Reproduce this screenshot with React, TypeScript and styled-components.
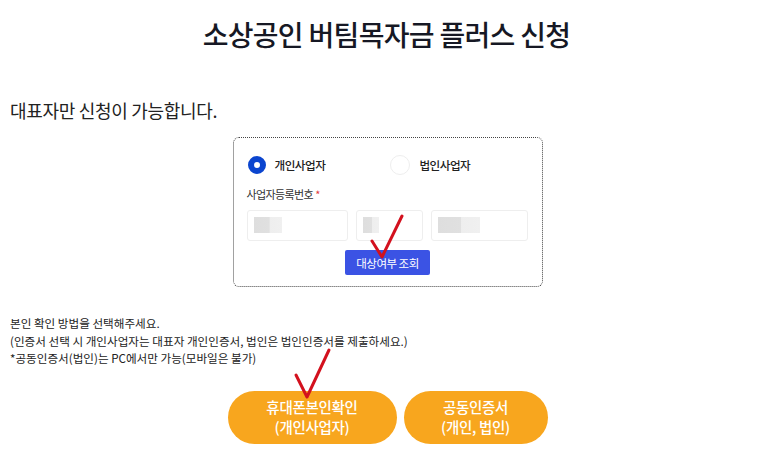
import React from "react";
import styled, { createGlobalStyle } from "styled-components";

const Global = createGlobalStyle`
  html, body { margin: 0; padding: 0; background: #ffffff; }
  body { font-family: "Noto Sans CJK KR", "Noto Sans", sans-serif; color: #222; }
  * { box-sizing: border-box; }
`;

const Page = styled.div`
  position: relative;
  width: 773px;
  height: 463px;
  overflow: hidden;
  background: #fff;
`;

const Title = styled.h1`
  margin: 0;
  padding-top: 14px;
  text-align: center;
  font-size: 28px;
  line-height: 40px;
  font-weight: 500;
  letter-spacing: -0.7px;
  color: #161824;
`;

const Subtitle = styled.p`
  margin: 44px 0 0 10px;
  font-size: 18px;
  line-height: 24px;
  letter-spacing: -0.3px;
  color: #222;
`;

const Card = styled.div`
  margin: 15px auto 0;
  width: 310px;
  height: 150px;
  transform: translateX(1px);
  border: 1px dotted #444;
  border-radius: 6px;
  padding: 16px 13px 0;
  display: flex;
  flex-direction: column;
`;

const RadioRow = styled.div`
  display: flex;
  align-items: center;
  height: 22px;
`;

const RadioItem = styled.label<{ $w: number }>`
  display: flex;
  align-items: center;
  gap: 9px;
  width: ${(p) => p.$w}px;
  font-size: 11.6px;
  font-weight: 500;
  letter-spacing: -0.5px;
  color: #222;
`;

const RadioDot = styled.span<{ $on?: boolean }>`
  width: ${(p) => (p.$on ? 18 : 20)}px;
  height: ${(p) => (p.$on ? 18 : 20)}px;
  border-radius: 50%;
  margin-left: ${(p) => (p.$on ? 1 : 0)}px;
  border: ${(p) => (p.$on ? "6px solid #0b45cf" : "1px solid #eeeeee")};
  background: #fff;
  flex: none;
`;

const FieldLabel = styled.div`
  margin-top: 10px;
  font-size: 11px;
  line-height: 16px;
  letter-spacing: -0.6px;
  color: #333;
  & > span { color: #e23a3a; margin-left: 2px; }
`;

const InputRow = styled.div`
  margin-top: 8px;
  display: flex;
  gap: 8px;
`;

const Input = styled.div<{ $w: number }>`
  width: ${(p) => p.$w}px;
  height: 31px;
  border: 1px solid #eeeeee;
  border-radius: 3px;
  padding: 6px 0 0 6px;
  background: #fff;
`;

const Blur = styled.div<{ $w: number }>`
  width: ${(p) => p.$w}px;
  height: 16px;
  background: linear-gradient(90deg, #dedede 0%, #e0e0e0 55%, #eeeeee 56%, #f0f0f0 100%);
`;

const CheckButton = styled.button`
  align-self: center;
  margin-top: 9px;
  width: 85px;
  height: 25px;
  border: none;
  border-radius: 2px;
  background: #3b53e4;
  color: #fff;
  font-family: inherit;
  font-size: 11.5px;
  letter-spacing: -0.5px;
  padding: 0;
`;

const Notes = styled.div`
  margin: 28px 0 0 10px;
  font-size: 11.6px;
  line-height: 17.5px;
  color: #222;
  & > p { margin: 0; }
`;

const ButtonRow = styled.div`
  margin-top: 23px;
  display: flex;
  justify-content: center;
  gap: 7px;
  transform: translateX(1px);
`;

const AuthButton = styled.button<{ $w: number }>`
  width: ${(p) => p.$w}px;
  height: 53px;
  border: none;
  border-radius: 27px;
  background: #f8a61e;
  color: #fff;
  font-family: inherit;
  font-size: 14.5px;
  font-weight: 500;
  line-height: 20px;
  letter-spacing: -0.3px;
  padding: 0;
`;

const Overlay = styled.svg`
  position: absolute;
  left: 0;
  top: 0;
  pointer-events: none;
`;

export default function App() {
  return (
    <Page>
      <Global />
      <Title>소상공인 버팀목자금 플러스 신청</Title>
      <Subtitle>대표자만 신청이 가능합니다.</Subtitle>
      <Card>
        <RadioRow>
          <RadioItem $w={146}>
            <RadioDot $on />
            개인사업자
          </RadioItem>
          <RadioItem $w={140}>
            <RadioDot />
            법인사업자
          </RadioItem>
        </RadioRow>
        <FieldLabel>
          사업자등록번호<span>*</span>
        </FieldLabel>
        <InputRow>
          <Input $w={102}>
            <Blur $w={28} />
          </Input>
          <Input $w={67}>
            <Blur $w={16} />
          </Input>
          <Input $w={98}>
            <Blur $w={42} />
          </Input>
        </InputRow>
        <CheckButton>대상여부 조회</CheckButton>
      </Card>
      <Notes>
        <p>본인 확인 방법을 선택해주세요.</p>
        <p>(인증서 선택 시 개인사업자는 대표자 개인인증서, 법인은 법인인증서를 제출하세요.)</p>
        <p>*공동인증서(법인)는 PC에서만 가능(모바일은 불가)</p>
      </Notes>
      <ButtonRow>
        <AuthButton $w={169}>
          휴대폰본인확인
          <br />
          (개인사업자)
        </AuthButton>
        <AuthButton $w={144}>
          공동인증서
          <br />
          (개인, 법인)
        </AuthButton>
      </ButtonRow>
      <Overlay width="773" height="463" viewBox="0 0 773 463">
        <polyline points="372,241 382,257 402,216" fill="none" stroke="#d3111e" strokeWidth="3" strokeLinecap="round" strokeLinejoin="round" />
        <polyline points="296,375 307,397 329,350" fill="none" stroke="#d3111e" strokeWidth="3" strokeLinecap="round" strokeLinejoin="round" />
      </Overlay>
    </Page>
  );
}
